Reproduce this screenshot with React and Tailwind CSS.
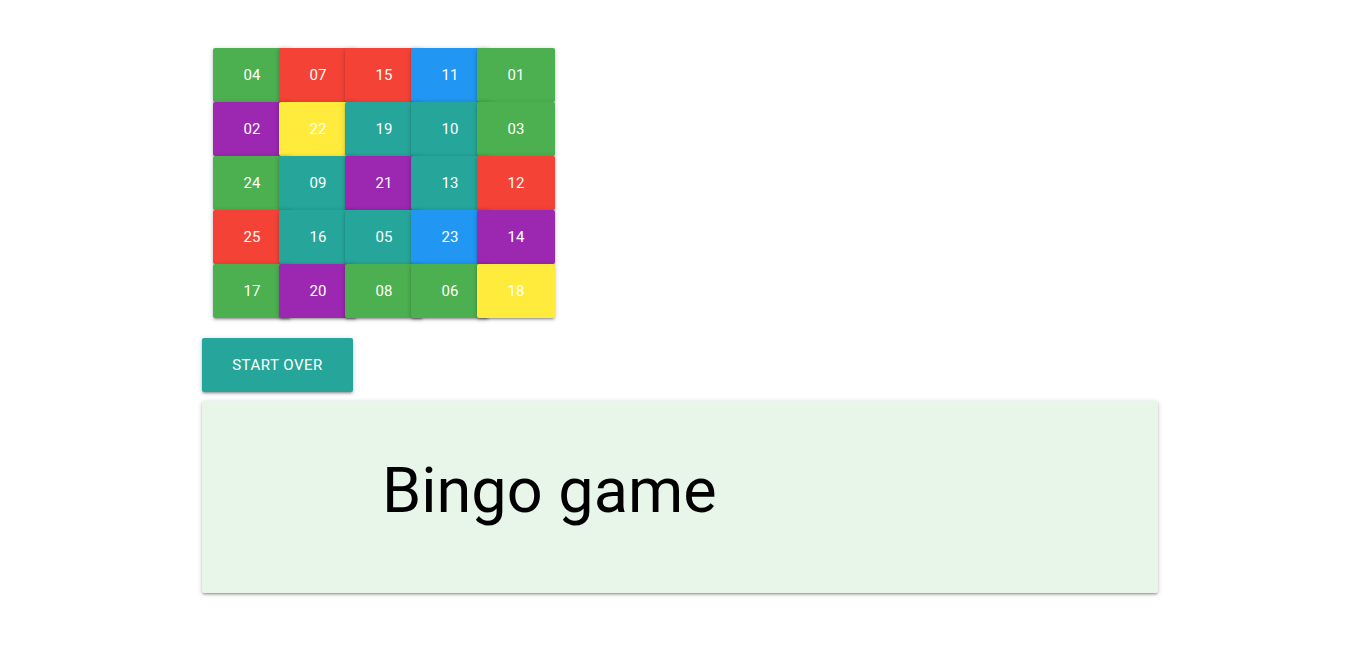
import React from "react";

const C = {
  g: "bg-[#4caf50]",
  r: "bg-[#f44336]",
  b: "bg-[#2196f3]",
  p: "bg-[#9c27b0]",
  y: "bg-[#ffeb3b]",
  t: "bg-[#26a69a]",
};

const rows = [
  [["04", "g"], ["07", "r"], ["15", "r"], ["11", "b"], ["01", "g"]],
  [["02", "p"], ["22", "y"], ["19", "t"], ["10", "t"], ["03", "g"]],
  [["24", "g"], ["09", "t"], ["21", "p"], ["13", "t"], ["12", "r"]],
  [["25", "r"], ["16", "t"], ["05", "t"], ["23", "b"], ["14", "p"]],
  [["17", "g"], ["20", "p"], ["08", "g"], ["06", "g"], ["18", "y"]],
];

const shadow =
  "shadow-[0_2px_2px_0_rgba(0,0,0,0.14),0_3px_1px_-2px_rgba(0,0,0,0.12),0_1px_5px_0_rgba(0,0,0,0.2)]";

export default function App() {
  return (
    <div
      className="min-h-[645px] bg-white"
      style={{ fontFamily: "Roboto, 'Liberation Sans', sans-serif" }}
    >
      <div className="ml-[202px] pt-[48px] flex flex-col">
        <div className="ml-[11px] flex flex-col">
          {rows.map((row, i) => (
            <div key={i} className="flex">
              {row.map(([n, c], j) => (
                <div
                  key={j}
                  className={`relative w-[78px] h-[54px] shrink-0 rounded-[2px] ${C[c]} ${shadow} flex items-center justify-center text-white text-[15px] ${j < 4 ? "mr-[-12px]" : ""}`}
                >
                  {n}
                </div>
              ))}
            </div>
          ))}
        </div>
        <div className="mt-[20px]">
          <button
            className={`w-[151px] h-[54px] rounded-[2px] bg-[#26a69a] text-white text-[15px] tracking-[0.5px] uppercase ${shadow}`}
          >
            Start over
          </button>
        </div>
        <div
          className={`mt-[9px] w-[956px] h-[192px] rounded-[2px] bg-[#e8f5e9] ${shadow} pl-[180px] pt-[50px]`}
        >
          <h1 className="text-[63px] leading-[80px] text-black font-normal">
            Bingo game
          </h1>
        </div>
      </div>
    </div>
  );
}
